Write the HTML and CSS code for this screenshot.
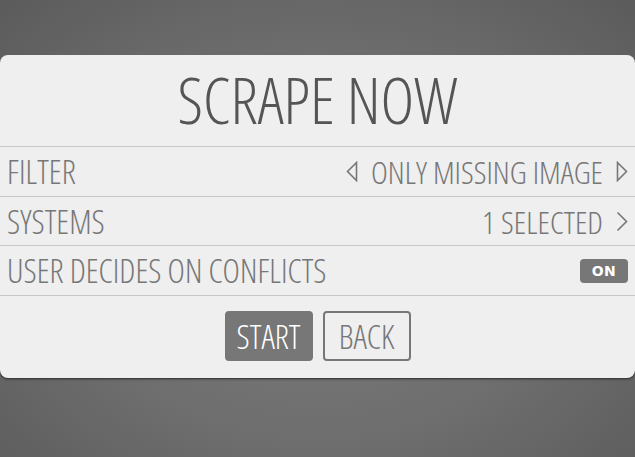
FILE: index.html
```html
<!DOCTYPE html>
<html>
<head>
<meta charset="utf-8">
<link rel="stylesheet" href="styles.css">
</head>
<body>
<div class="screen">
  <div class="panel">
    <div class="title">SCRAPE NOW</div>
    <div class="row">
      <span class="label">FILTER</span>
      <span class="value">
        <svg class="arrow" width="12" height="21" viewBox="0 0 12 21"><path d="M10.5 1.5 L1.5 10.5 L10.5 19.5 Z" fill="none" stroke="#777" stroke-width="1.6" stroke-linejoin="miter"/></svg>
        <span class="vtext">ONLY MISSING IMAGE</span>
        <svg class="arrow" width="12" height="21" viewBox="0 0 12 21"><path d="M1.5 1.5 L10.5 10.5 L1.5 19.5 Z" fill="none" stroke="#777" stroke-width="1.6" stroke-linejoin="miter"/></svg>
      </span>
    </div>
    <div class="row">
      <span class="label">SYSTEMS</span>
      <span class="value">
        <span class="vtext">1 SELECTED</span>
        <svg class="arrow" width="12" height="21" viewBox="0 0 12 21"><path d="M1.5 1.5 L10.5 10.5 L1.5 19.5" fill="none" stroke="#777" stroke-width="1.6"/></svg>
      </span>
    </div>
    <div class="row">
      <span class="label">USER DECIDES ON CONFLICTS</span>
      <span class="badge">ON</span>
    </div>
    <div class="buttons">
      <div class="btn active">START</div>
      <div class="btn">BACK</div>
    </div>
  </div>
</div>
</body>
</html>
```
FILE: styles.css
```css
html, body {
  margin: 0;
  padding: 0;
}
body {
  width: 635px;
  height: 457px;
  overflow: hidden;
  background: radial-gradient(ellipse 70% 75% at 50% 55%, #7d7d7d 0%, #6e6e6e 55%, #5c5c5c 100%);
  font-family: "Open Sans", "Liberation Sans", sans-serif;
  font-stretch: 75%;
  font-weight: 300;
}
.screen {
  padding-top: 55px;
}
.panel {
  width: 635px;
  background: #efefef;
  border-radius: 8px;
  box-shadow: 0 1px 0 #3e3e3e, 0 2px 2px rgba(0,0,0,0.25);
}
.title {
  height: 91px;
  display: flex;
  align-items: center;
  justify-content: center;
  font-size: 64px;
  color: #555;
  line-height: 1;
  padding-bottom: 2px;
  box-sizing: border-box;
}
.row {
  height: 49.7px;
  border-top: 1.5px solid #c8c8c8;
  display: flex;
  align-items: center;
  justify-content: space-between;
  padding: 0 7px 0 7px;
  box-sizing: border-box;
  color: #777;
  font-size: 32px;
  line-height: 1;
}
.label {
  display: block;
  font-size: 33px;
}
.vtext {
  display: block;
  padding-top: 1px;
}
.value {
  display: flex;
  align-items: center;
  gap: 13px;
}
.arrow {
  display: block;
}
.badge {
  font-family: "DejaVu Sans", "Liberation Sans", sans-serif;
  font-stretch: 100%;
  font-weight: 700;
  font-size: 14px;
  color: #fff;
  background: #777;
  border-radius: 4px;
  width: 48px;
  height: 24px;
  display: flex;
  align-items: center;
  justify-content: center;
  letter-spacing: 0.5px;
}
.buttons {
  height: 83px;
  border-top: 1.5px solid #c8c8c8;
  box-sizing: border-box;
  display: flex;
  align-items: center;
  justify-content: center;
  gap: 10px;
  padding-bottom: 2px;
}
.btn {
  width: 88px;
  height: 50px;
  box-sizing: border-box;
  border: 2px solid #777;
  border-radius: 4px;
  display: flex;
  align-items: center;
  justify-content: center;
  font-size: 33px;
  color: #777;
  line-height: 1;
}
.btn.active {
  background: #777;
  color: #fff;
}
```
